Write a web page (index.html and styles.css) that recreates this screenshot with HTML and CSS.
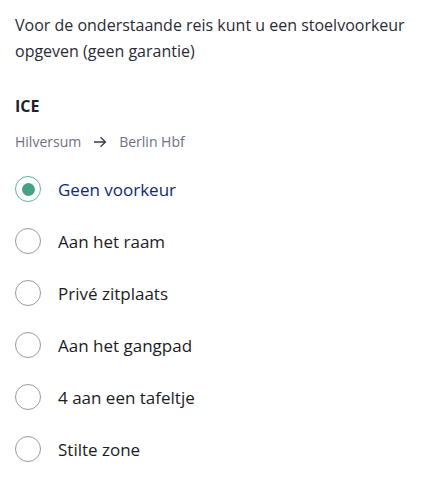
FILE: index.html
```html
<!DOCTYPE html>
<html lang="nl">
<head>
<meta charset="utf-8">
<link rel="stylesheet" href="styles.css">
</head>
<body>
<div class="page">
  <p class="intro">Voor de onderstaande reis kunt u een stoelvoorkeur opgeven (geen garantie)</p>
  <h2 class="train">ICE</h2>
  <div class="route">
    <span>Hilversum</span>
    <svg class="arrow" width="14" height="12" viewBox="0 0 14 12"><path d="M1 6H12.5M7.5 1.2L12.5 6L7.5 10.8" fill="none" stroke="#3a3a4a" stroke-width="1.3"/></svg>
    <span>Berlin Hbf</span>
  </div>
  <div class="options">
    <label class="option selected"><span class="radio"></span><span class="label">Geen voorkeur</span></label>
    <label class="option"><span class="radio"></span><span class="label">Aan het raam</span></label>
    <label class="option"><span class="radio"></span><span class="label">Privé zitplaats</span></label>
    <label class="option"><span class="radio"></span><span class="label">Aan het gangpad</span></label>
    <label class="option"><span class="radio"></span><span class="label">4 aan een tafeltje</span></label>
    <label class="option"><span class="radio"></span><span class="label">Stilte zone</span></label>
  </div>
</div>
</body>
</html>
```
FILE: styles.css
```css
html, body {
  margin: 0;
  padding: 0;
  background: #ffffff;
}
.page {
  padding: 12px 15px 0 15px;
  font-family: "Open Sans", "Noto Sans", sans-serif;
  color: #2b2b36;
}
.intro {
  margin: 0;
  font-size: 16px;
  line-height: 26px;
  color: #2b2b36;
}
.train {
  margin: 31px 0 0 0;
  font-size: 16px;
  line-height: 22px;
  font-weight: 700;
  color: #1f1f2e;
}
.route {
  margin-top: 15px;
  display: flex;
  align-items: center;
  gap: 12px;
  font-size: 14px;
  line-height: 20px;
  color: #707080;
}
.options {
  margin-top: 11px;
  display: flex;
  flex-direction: column;
}
.option {
  display: flex;
  align-items: center;
  height: 52px;
  gap: 17px;
}
.radio {
  width: 26px;
  height: 26px;
  box-sizing: border-box;
  border: 1.5px solid #9a9aa2;
  border-radius: 50%;
  display: flex;
  align-items: center;
  justify-content: center;
  flex: none;
}
.selected .radio {
  border-color: #5cb898;
}
.selected .radio::after {
  content: "";
  width: 13px;
  height: 13px;
  border-radius: 50%;
  background: #45a382;
}
.label {
  font-size: 17px;
  color: #1c1c24;
}
.selected .label {
  color: #0d2a78;
}
```
